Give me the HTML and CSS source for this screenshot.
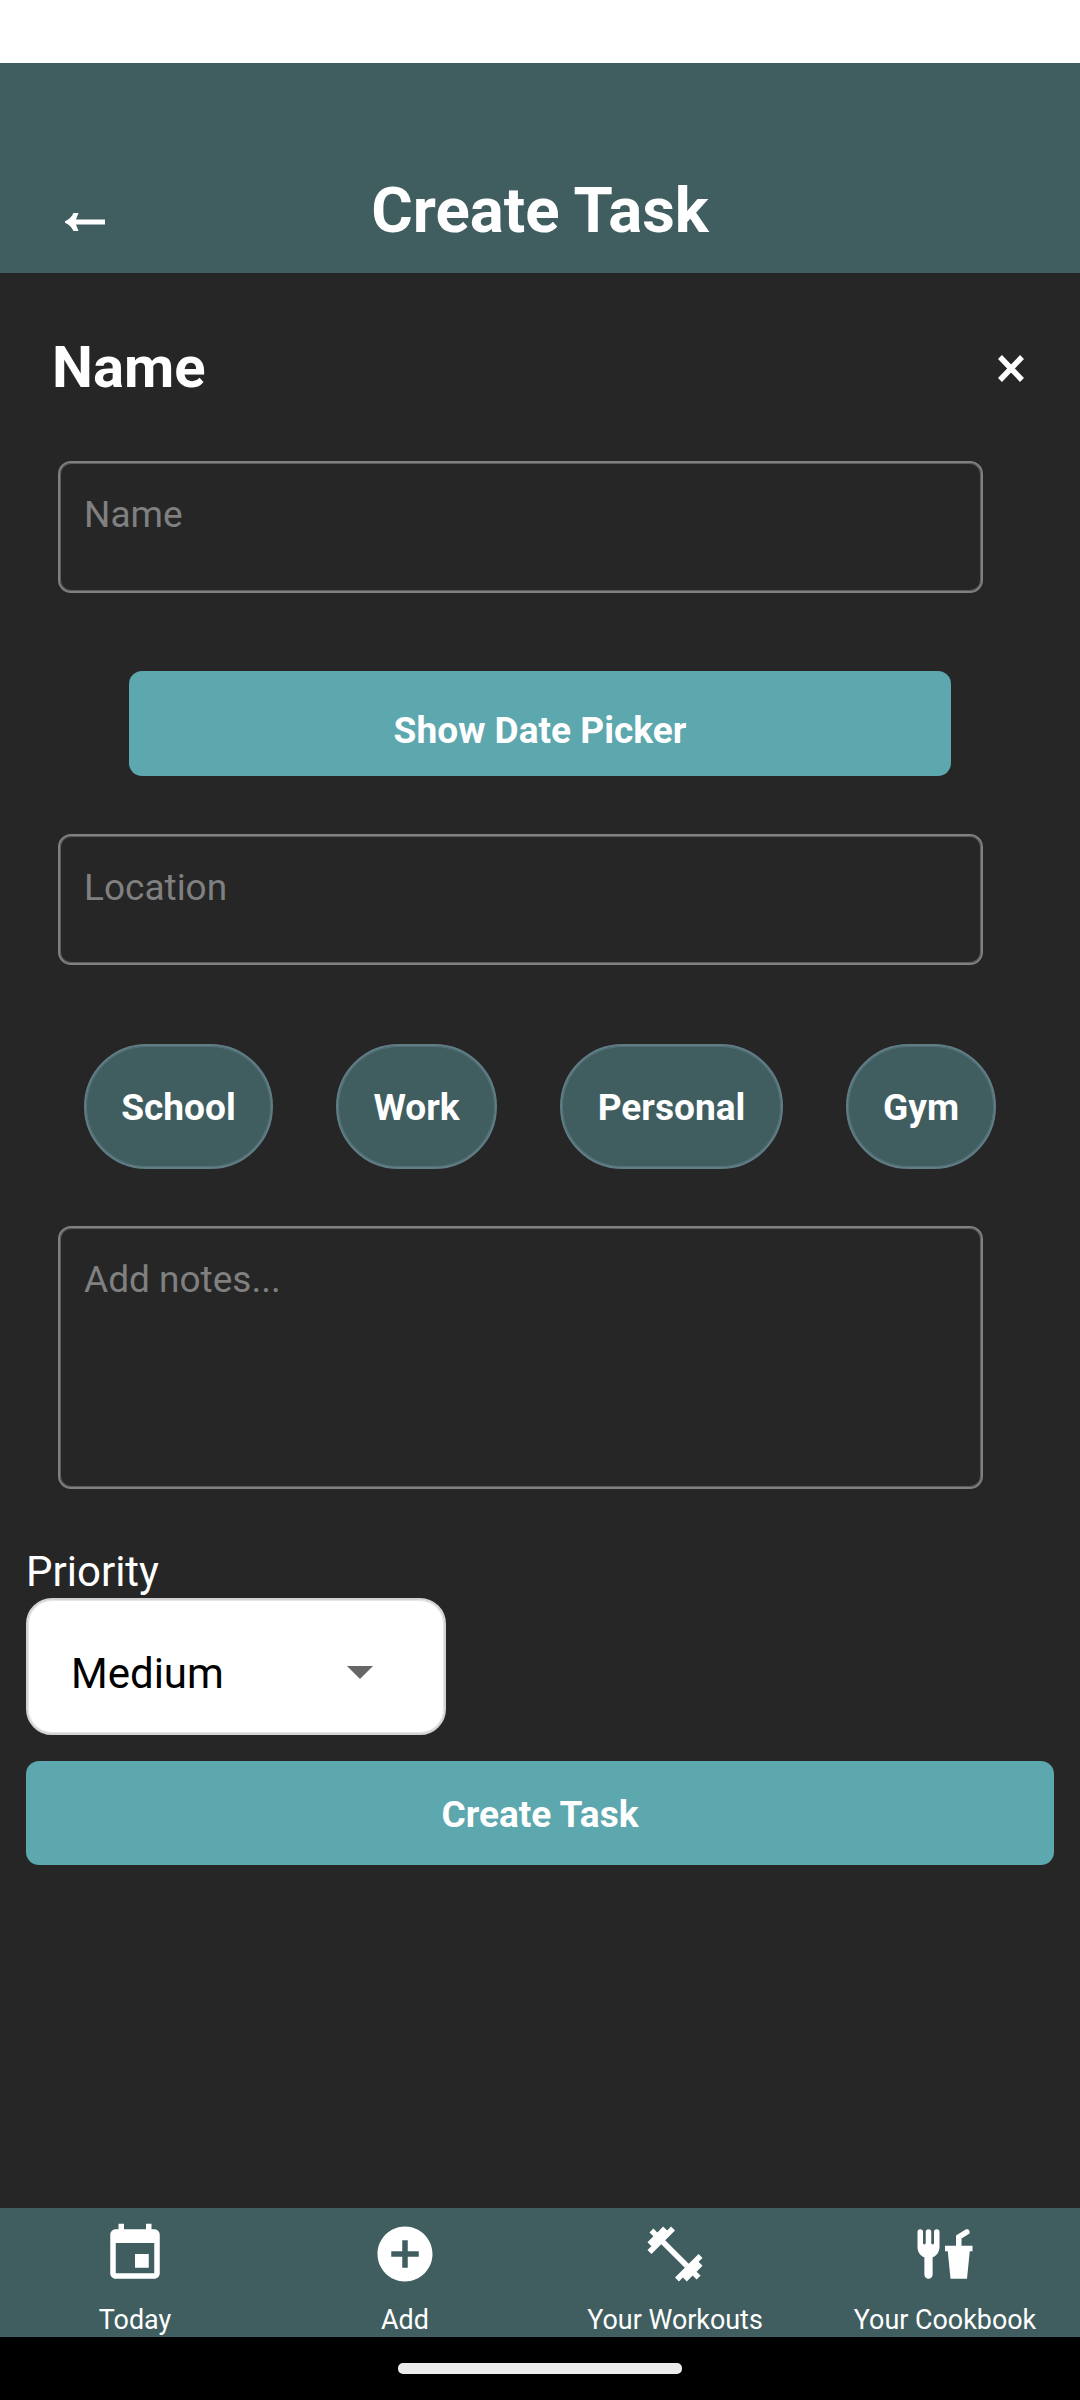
FILE: index.html
```html
<!DOCTYPE html>
<html lang="en">
<head>
<meta charset="utf-8">
<title>Create Task</title>
<link rel="stylesheet" href="styles.css">
</head>
<body>
<div class="screen">
  <header class="header">
    <svg class="back" viewBox="0 0 40 18" role="img" aria-label="Back"><path d="M0 8.200 Q6 5.500 8.500 0 H13.500 L11 6.500 H40 V11.500 H11 L13.500 18 H8.500 Q6 12.500 0 9.800 Z"/></svg>
    <h1 class="title">Create Task</h1>
  </header>
  <main class="form">
    <div class="heading">
      <h2 class="heading-text">Name</h2>
      <svg class="close" viewBox="0 0 26 27" role="img" aria-label="Close"><path d="M2 2 L24 25 M24 2 L2 25"/></svg>
    </div>
    <div class="field field-name">Name</div>
    <button class="button date-button">Show Date Picker</button>
    <div class="field field-location">Location</div>
    <div class="tags">
      <button class="tag tag-school">School</button>
      <button class="tag tag-work">Work</button>
      <button class="tag tag-personal">Personal</button>
      <button class="tag tag-gym">Gym</button>
    </div>
    <div class="field field-notes">Add notes...</div>
    <div class="label">Priority</div>
    <div class="select">
      <span>Medium</span>
      <svg class="caret" viewBox="0 0 26 13"><path d="M0 0H26L13 13Z"/></svg>
    </div>
    <button class="button create-button">Create Task</button>
  </main>
  <nav class="nav">
    <div class="nav-item">
      <svg class="nav-icon" viewBox="0 0 24 24"><path d="M17 12h-5v5h5v-5zM16 1v2H8V1H6v2H5c-1.11 0-1.99.9-1.99 2L3 19c0 1.1.89 2 2 2h14c1.1 0 2-.9 2-2V5c0-1.1-.9-2-2-2h-1V1h-2zm3 18H5V8h14v11z"/></svg>
      <span>Today</span>
    </div>
    <div class="nav-item">
      <svg class="nav-icon" viewBox="0 0 24 24"><path d="M12 2C6.48 2 2 6.48 2 12s4.480 10 10 10 10-4.480 10-10S17.520 2 12 2zm5 11h-4v4h-2v-4H7v-2h4V7h2v4h4v2z"/></svg>
      <span>Add</span>
    </div>
    <div class="nav-item">
      <svg class="nav-icon" viewBox="0 0 24 24"><path d="M20.570 14.860L22 13.430 20.570 12 17 15.570 8.430 7 12 3.430 10.570 2 9.140 3.430 7.710 2 5.570 4.140 4.140 2.710 2.710 4.140l1.430 1.430L2 7.710l1.430 1.430L2 10.570 3.430 12 7 8.430 15.570 17 12 20.570 13.430 22l1.430-1.430L16.290 22l2.140-2.140 1.430 1.430 1.430-1.430-1.430-1.430L22 16.290z"/></svg>
      <span>Your Workouts</span>
    </div>
    <div class="nav-item">
      <svg class="nav-icon" viewBox="0 0 24 24"><path d="M3 3A1 1 0 0 0 2 4V9.500C2 11.190 3.030 12.630 4.500 13.220V19.500A1.500 1.500 0 0 0 6 21A1.500 1.500 0 0 0 7.500 19.500V13.220C8.970 12.630 10 11.190 10 9.500V4A1 1 0 0 0 9 3A1 1 0 0 0 8 4V8A.5.5 0 0 1 7.500 8.500A.5.5 0 0 1 7 8V4A1 1 0 0 0 6 3A1 1 0 0 0 5 4V8A.5.5 0 0 1 4.500 8.500A.5.5 0 0 1 4 8V4A1 1 0 0 0 3 3M19.880 3C19.750 3 19.620 3.040 19.500 3.100L16 5.250V9H12V11H13L14 21H20L21 11H22V9H18V6.340L20.500 4.840C21 4.560 21.130 4 20.840 3.500C20.630 3.140 20.260 2.950 19.880 3Z"/></svg>
      <span>Your Cookbook</span>
    </div>
  </nav>
  <div class="system-bar"><div class="handle"></div></div>
</div>
</body>
</html>
```
FILE: styles.css
```css
* { box-sizing: border-box; }

body {
  margin: 0;
  background: #fff;
  font-family: Roboto, sans-serif;
  color: #fff;
}

.screen {
  display: flex;
  flex-direction: column;
  width: 1080px;
  height: 2400px;
  padding-top: 63px;
}

.header {
  display: grid;
  grid-template-columns: 105px 1fr 105px;
  height: 210px;
  padding-top: 111px;
  background: #405e60;
}

.back {
  width: 40px;
  height: 18px;
  margin: 39px 0 0 65px;
  fill: #fff;
}

.title {
  margin: 0;
  font-size: 63.500px;
  line-height: 74px;
  text-align: center;
}

.form {
  flex: 1;
  display: flex;
  flex-direction: column;
  align-items: flex-start;
  padding: 0 26px;
  background: #262626;
}

.heading {
  display: flex;
  justify-content: space-between;
  align-self: stretch;
  height: 188px;
  padding: 60px 30px 0 26px;
}

.heading-text {
  margin: 0;
  font-size: 58px;
  line-height: 68px;
}

.close {
  width: 26px;
  height: 27px;
  margin-top: 21.500px;
  fill: none;
  stroke: #fff;
  stroke-width: 5.500;
}

.field {
  width: 925px;
  margin-left: 32px;
  padding: 30px 24px;
  border: 2px solid #808080;
  border-radius: 13px;
  box-shadow: inset 0 0 0 1px rgba(128, 128, 128, 0.6);
  font-size: 37px;
  line-height: 44px;
  color: #808080;
}

.field-name { height: 132px; }
.field-location { height: 131px; margin-top: 58px; }
.field-notes { height: 263px; margin-top: 57px; }

.button {
  border: 0;
  border-radius: 13px;
  padding: 0;
  background: #5da7ae;
  font: bold 37.100px/44px Roboto, sans-serif;
  color: #fff;
}

.date-button {
  width: 822px;
  height: 105px;
  margin: 78px 0 0 103px;
  padding-top: 15px;
}

.tags {
  display: flex;
  gap: 63px;
  margin: 79px 0 0 58px;
}

.tag {
  height: 125px;
  padding: 2px 0 0;
  border: 2px solid #607d86;
  border-radius: 63px;
  box-shadow: inset 0 0 0 1px rgba(96, 125, 134, 0.6);
  background: #405e60;
  font: bold 37.100px/44px Roboto, sans-serif;
  color: #fff;
}

.tag-school { width: 189px; }
.tag-work { width: 161px; }
.tag-personal { width: 223px; }
.tag-gym { width: 150px; }

.label {
  margin-top: 57px;
  padding-bottom: 1px;
  font-size: 42px;
  line-height: 51px;
}

.select {
  display: flex;
  justify-content: space-between;
  align-items: center;
  width: 420px;
  height: 137px;
  padding: 14px 71px 0 43px;
  border: 2px solid #d3d3d3;
  border-radius: 26px;
  box-shadow: inset 0 0 0 1px rgba(211, 211, 211, 0.6);
  background: #fff;
  font-size: 42px;
  line-height: 50px;
  color: #000;
}

.caret {
  width: 26px;
  height: 13px;
  margin-bottom: 2px;
  fill: #666;
}

.create-button {
  align-self: stretch;
  height: 104px;
  margin-top: 26px;
  padding-top: 4px;
}

.nav {
  display: grid;
  grid-template-columns: repeat(4, 1fr);
  height: 129px;
  padding-top: 13px;
  background: #405e60;
}

.nav-item {
  display: flex;
  flex-direction: column;
  align-items: center;
  gap: 17px;
  font-size: 26.900px;
  line-height: 32px;
}

.nav-icon {
  width: 66px;
  height: 66px;
  fill: #fff;
}

.system-bar {
  display: flex;
  justify-content: center;
  height: 63px;
  padding-top: 26px;
  background: #000;
}

.handle {
  width: 284px;
  height: 11px;
  border-radius: 5px;
  background: #ececec;
}
```
